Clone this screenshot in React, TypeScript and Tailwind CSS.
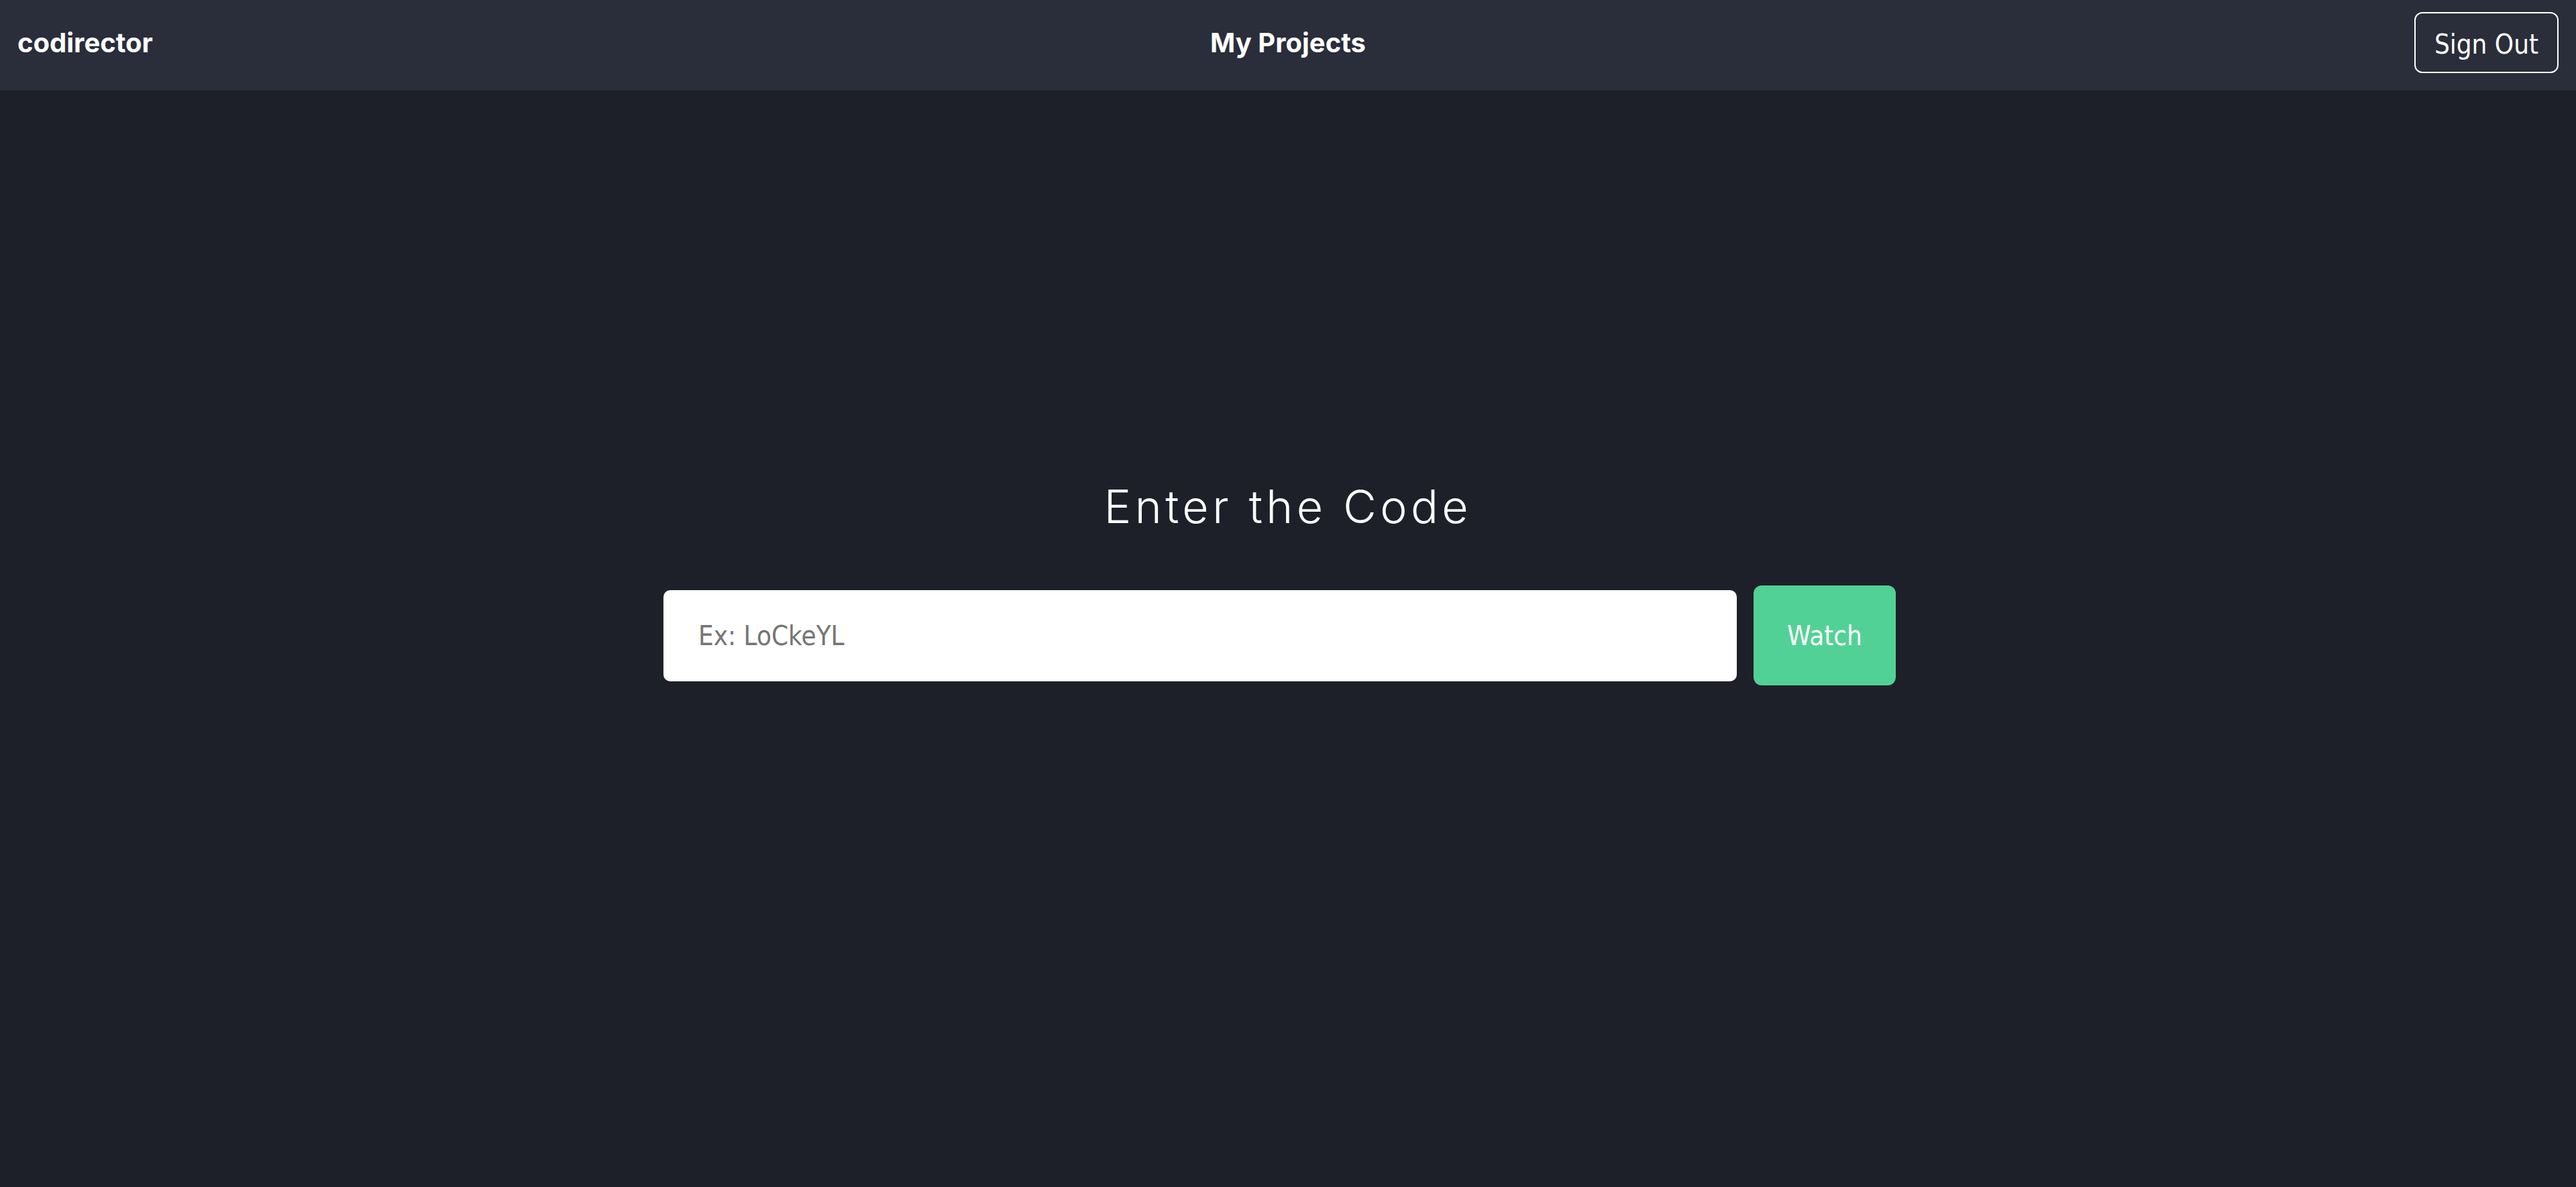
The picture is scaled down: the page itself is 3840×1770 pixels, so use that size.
import type { FC } from "react";

const condensed = "font-['DejaVu_Sans_Condensed','DejaVu_Sans',sans-serif] font-stretch-condensed";

const Header: FC = () => {
  return (
    <header className="grid h-[135px] grid-cols-3 items-center bg-[#2a2d3a] px-[26px] pb-[8px] text-white">
      <div className="font-['Inter',sans-serif] text-[40px] font-bold">codirector</div>
      <div className="text-center font-['Inter',sans-serif] text-[40px] font-bold">My Projects</div>
      <div className="flex justify-end">
        <button
          className={`h-[91px] w-[215px] rounded-[12px] border-2 border-white pt-[4px] text-[40px] text-white ${condensed}`}
        >
          Sign Out
        </button>
      </div>
    </header>
  );
};

const App: FC = () => {
  return (
    <div className="flex min-h-[1770px] flex-col bg-[#1e2029]">
      <Header />
      <main className="flex flex-1 flex-col items-center pt-[579px]">
        <h1 className="font-['Inter',sans-serif] text-[68px] leading-[82px] font-light tracking-[0.08em] text-white">
          Enter the Code
        </h1>
        <form className="mt-[77px] flex items-center" onSubmit={(e) => e.preventDefault()}>
          <input
            type="text"
            placeholder="Ex: LoCkeYL"
            className={`h-[136px] w-[1600px] rounded-[10px] bg-white px-[52px] text-[40px] text-[#333] outline-none placeholder:text-[#757575] ${condensed}`}
          />
          <button
            type="submit"
            className={`mx-[25px] h-[149px] w-[212px] rounded-[12px] bg-[#52d196] text-[40px] text-white ${condensed}`}
          >
            Watch
          </button>
        </form>
      </main>
    </div>
  );
};

export default App;
